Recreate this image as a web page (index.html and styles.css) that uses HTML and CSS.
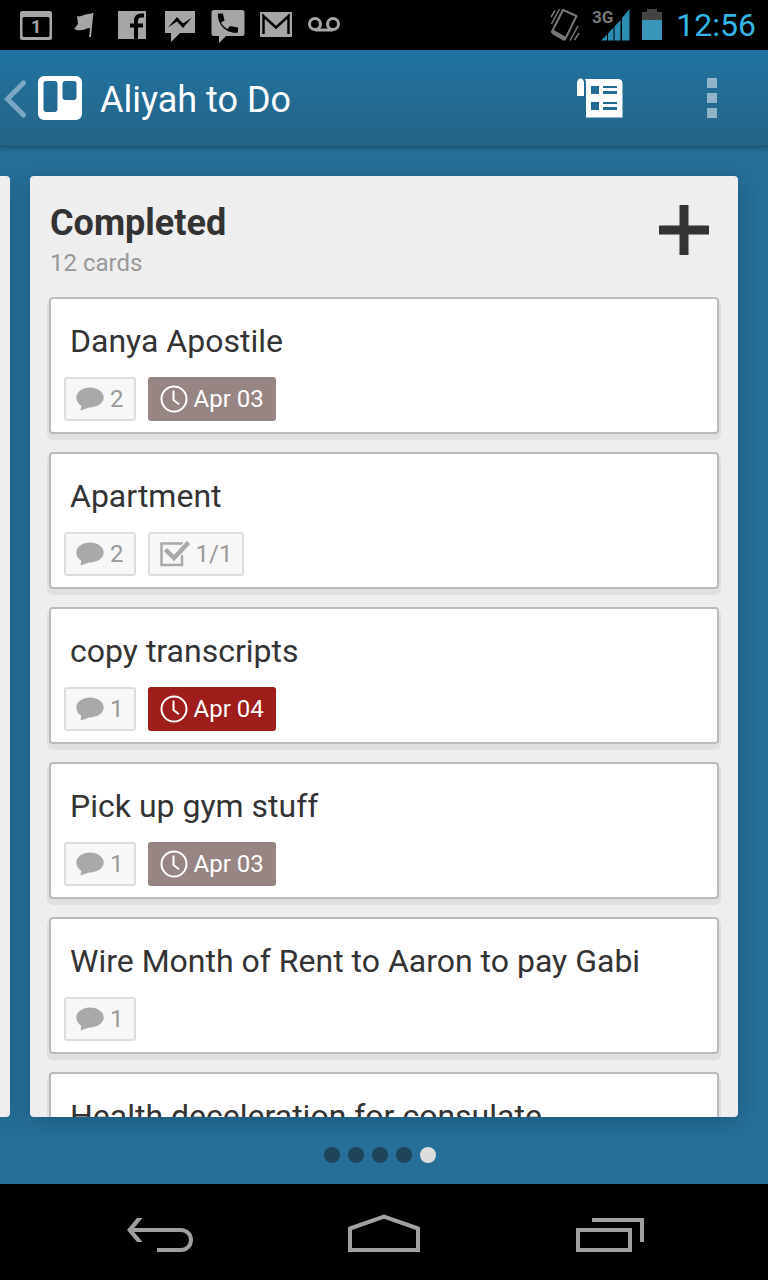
FILE: index.html
```html
<!DOCTYPE html>
<html lang="en">
<head>
    <meta charset="UTF-8">
    <meta name="viewport" content="width=device-width, initial-scale=1.0">
    <title>Aliyah to Do</title>
    <link rel="stylesheet" href="styles.css">
</head>
<body>
    <!-- shared badge icons -->
    <svg class="defs" aria-hidden="true">
        <symbol id="comment" viewBox="0 0 28 24">
            <path d="M14 0.5C6.300.5 0.300 5 0.300 10.500c0 3.700 2 6.500 5 8.300L4.500 23.600l8.800-3.200C21.500 20.500 27.700 16 27.700 10.500S21.700.5 14 .5z" fill="#a9a9a9"/>
        </symbol>
        <symbol id="clock" viewBox="0 0 28 28">
            <circle cx="14" cy="14" r="12.500" fill="none" stroke="#fff" stroke-width="2"/>
            <path d="M13.500 5.500V15l5.500 4.200" fill="none" stroke="#fff" stroke-width="2"/>
        </symbol>
        <symbol id="check" viewBox="0 0 30 26">
            <path d="M23 2.500H1.500V24H22V14" fill="none" stroke="#a9a9a9" stroke-width="2.500"/>
            <path d="M5.500 8.500l8.500 8.500L28.500 1.500" fill="none" stroke="#f7f7f7" stroke-width="7"/>
            <path d="M5.500 8.500l8.500 8.500L28.500 1.500" fill="none" stroke="#a9a9a9" stroke-width="4.500"/>
        </symbol>
    </svg>

    <div class="statusbar">
        <div class="notifications">
            <svg width="48" height="50" viewBox="0 0 48 50">
                <path fill-rule="evenodd" d="M10 11h28a2 2 0 0 1 2 2v25a2 2 0 0 1-2 2H10a2 2 0 0 1-2-2V13a2 2 0 0 1 2-2zM12 17a1.500 1.500 0 0 0-1.500 1.500v17A1.500 1.500 0 0 0 12 37h24a1.500 1.500 0 0 0 1.500-1.500v-17A1.500 1.500 0 0 0 36 17z" fill="#a6a6a6"/>
                <text x="19" y="33" class="day">1</text>
            </svg>
            <svg width="48" height="50" viewBox="0 0 48 50">
                <path d="M17 16c4 2 8-3 15-2L30.500 28c-4-.5-9 4.500-16.500 1l4-5z" fill="#a6a6a6"/>
                <path d="M32.500 13L30 37" stroke="#a6a6a6" stroke-width="1.800"/>
            </svg>
            <svg width="48" height="50" viewBox="0 0 48 50">
                <path d="M10 11h28v28H10z" fill="#a6a6a6"/>
                <path d="M28 39V21c0-4 2-5.500 5-5.500h3M22 25.500h13" fill="none" stroke="#000" stroke-width="4"/>
            </svg>
            <svg width="48" height="50" viewBox="0 0 48 50">
                <path d="M9 11h30v22H24l-9 9v-9H9z" fill="#a6a6a6"/>
                <path d="M12 27.500l9-10.500 6 6.500 9-6-9 10.500-6-6.500z" fill="#000"/>
            </svg>
            <svg width="48" height="50" viewBox="0 0 48 50">
                <path d="M10 10h28a2.500 2.500 0 0 1 2.500 2.500v21A2.500 2.500 0 0 1 38 36H22l-7 7v-7h-5a2.500 2.500 0 0 1-2.500-2.500v-21A2.500 2.500 0 0 1 10 10z" fill="#a6a6a6"/>
                <path d="M14 13.500l5 0 1.500 7-3.500 2c1.500 3 3.500 5 6.500 6.500l2.500-3 8 1.500v5c-11 2-21-8-20-19z" fill="#000"/>
            </svg>
            <svg width="48" height="50" viewBox="0 0 48 50">
                <path d="M8 12h32v25H8z" fill="#a6a6a6"/>
                <path d="M11.500 34V16L24 27.500 36.500 16v18" fill="none" stroke="#000" stroke-width="2.500"/>
            </svg>
            <svg width="48" height="50" viewBox="0 0 48 50">
                <g fill="none" stroke="#a6a6a6" stroke-width="3">
                    <circle cx="15" cy="24" r="5.500"/>
                    <circle cx="33" cy="24" r="5.500"/>
                    <path d="M15 30h18"/>
                </g>
            </svg>
        </div>
        <div class="system">
            <svg width="30" height="50" viewBox="0 0 30 50">
                <path d="M13 10l13.500 6L15 39.500 1.800 32z" fill="none" stroke="#777" stroke-width="2" stroke-linejoin="round"/>
                <path d="M3 29.500l13 7.500-2 4L2 34z" fill="#777"/>
                <path d="M9.500 9L1.500 24M5 10.500L1 17M28 26l-8 14.500M29 33l-4.500 7" stroke="#777" stroke-width="1.500"/>
            </svg>
            <svg width="38" height="50" viewBox="0 0 38 50">
                <path d="M9 40.500l6-6v6zM16 33.500l5.500-6v13H16zM22.500 26.500l6-6.500v20.500h-6zM30 18l7.500-9v31.500H30z" fill="#2a8db3"/>
                <text x="0" y="23" class="network">3G</text>
            </svg>
            <svg width="20" height="50" viewBox="0 0 20 50">
                <path d="M0 20v-8h5V9h10v3h5v8z" fill="#444"/>
                <path d="M0 20h20v20H0z" fill="#3996ba"/>
            </svg>
            <span class="time">12:56</span>
        </div>
    </div>

    <header class="actionbar">
        <button class="up" aria-label="Boards">
            <svg width="82" height="96" viewBox="0 0 82 96">
                <path d="M23.500 33L7.500 49l16 16" fill="none" stroke="#7aa7c1" stroke-width="5" stroke-linecap="round"/>
                <path fill-rule="evenodd" d="M44 26h32a6 6 0 0 1 6 6v32a6 6 0 0 1-6 6H44a6 6 0 0 1-6-6V32a6 6 0 0 1 6-6zM46.500 31a3 3 0 0 0-3 3v25a3 3 0 0 0 3 3h8a3 3 0 0 0 3-3V34a3 3 0 0 0-3-3zM65.500 31a3 3 0 0 0-3 3v13a3 3 0 0 0 3 3h8a3 3 0 0 0 3-3V34a3 3 0 0 0-3-3z" fill="#fff"/>
            </svg>
        </button>
        <h1 class="board-title">Aliyah to Do</h1>
        <button class="action" aria-label="Activity">
            <svg width="46" height="40" viewBox="0 0 46 40">
                <path d="M0 18V5c0-6 7-6 7 0v13z" fill="#fff"/>
                <path fill-rule="evenodd" d="M8 1h33q4.500 0 4.500 4.500V39.500H9V5q0-2-1-4zM14 8v8h8V8zM26 8v2h14V8zM26 13v3h14v-3zM14 24v8h8v-8zM26 24v2h14v-2zM26 29v3h14v-3z" fill="#fff"/>
            </svg>
        </button>
        <button class="action" aria-label="More options">
            <svg width="10" height="40" viewBox="0 0 10 40">
                <path d="M0 0h10v10H0zM0 15h10v10H0zM0 30h10v10H0z" fill="#90b5cb"/>
            </svg>
        </button>
    </header>

    <main class="board">
        <div class="lists">
            <div class="list-peek"></div>
            <section class="list">
                <div class="list-header">
                    <div>
                        <h2 class="list-title">Completed</h2>
                        <p class="list-count">12 cards</p>
                    </div>
                    <button class="add" aria-label="Add card">
                        <svg width="50" height="50" viewBox="0 0 50 50">
                            <path d="M25 0v50M0 25h50" stroke="#333" stroke-width="9"/>
                        </svg>
                    </button>
                </div>
                <div class="cards">
                    <article class="card">
                        <h3 class="card-title">Danya Apostile</h3>
                        <div class="badges">
                            <span class="badge"><svg width="28" height="24"><use href="#comment"/></svg>2</span>
                            <span class="badge due"><svg width="28" height="28"><use href="#clock"/></svg>Apr 03</span>
                        </div>
                    </article>
                    <article class="card">
                        <h3 class="card-title">Apartment</h3>
                        <div class="badges">
                            <span class="badge"><svg width="28" height="24"><use href="#comment"/></svg>2</span>
                            <span class="badge"><svg width="30" height="26"><use href="#check"/></svg>1/1</span>
                        </div>
                    </article>
                    <article class="card">
                        <h3 class="card-title">copy transcripts</h3>
                        <div class="badges">
                            <span class="badge"><svg width="28" height="24"><use href="#comment"/></svg>1</span>
                            <span class="badge due overdue"><svg width="28" height="28"><use href="#clock"/></svg>Apr 04</span>
                        </div>
                    </article>
                    <article class="card">
                        <h3 class="card-title">Pick up gym stuff</h3>
                        <div class="badges">
                            <span class="badge"><svg width="28" height="24"><use href="#comment"/></svg>1</span>
                            <span class="badge due"><svg width="28" height="28"><use href="#clock"/></svg>Apr 03</span>
                        </div>
                    </article>
                    <article class="card">
                        <h3 class="card-title">Wire Month of Rent to Aaron to pay Gabi</h3>
                        <div class="badges">
                            <span class="badge"><svg width="28" height="24"><use href="#comment"/></svg>1</span>
                        </div>
                    </article>
                    <article class="card">
                        <h3 class="card-title">Health deceleration for consulate</h3>
                    </article>
                </div>
            </section>
        </div>
        <div class="pager">
            <span class="dot"></span>
            <span class="dot"></span>
            <span class="dot"></span>
            <span class="dot"></span>
            <span class="dot current"></span>
        </div>
    </main>

    <nav class="navbar">
        <button aria-label="Back">
            <svg width="72" height="40" viewBox="0 0 72 40">
                <path d="M8 16h49c5.500 0 10 4.500 10 10s-4.500 10-10 10H33" fill="none" stroke="#a0a0a0" stroke-width="4"/>
                <path d="M13 4h5.500L8.500 16l10 12H13L3 16z" fill="#a0a0a0"/>
            </svg>
        </button>
        <button aria-label="Home">
            <svg width="72" height="40" viewBox="0 0 72 40">
                <path d="M2 36V14.500L36 2.500l34 12V36z" fill="none" stroke="#a0a0a0" stroke-width="4"/>
            </svg>
        </button>
        <button aria-label="Recent apps">
            <svg width="72" height="40" viewBox="0 0 72 40">
                <path d="M6 16h52v20H6zM20 6h50v22" fill="none" stroke="#a0a0a0" stroke-width="4"/>
            </svg>
        </button>
    </nav>
</body>
</html>
```

FILE: styles.css
```css
* { box-sizing: border-box; margin: 0; padding: 0; }
body { display: flex; flex-direction: column; height: 100vh; overflow: hidden; background: #256f98; font-family: Roboto, "Noto Sans", sans-serif; color: #333; }
button { border: 0; background: none; cursor: pointer; }
svg { display: block; flex: none; }
.defs { display: none; }

/* status bar */
.statusbar { display: flex; justify-content: space-between; height: 50px; padding: 0 12px; background: #000; }
.notifications, .system { display: flex; }
.system { align-items: center; gap: 12px; }
.day { font-size: 18px; font-weight: bold; fill: #a6a6a6; }
.network { font-size: 17px; font-weight: bold; fill: #777; }
.time { margin-left: 2px; font-size: 32px; line-height: 38px; color: #33b5e5; }

/* action bar */
.actionbar { display: flex; align-items: center; height: 97px; border-bottom: 1px solid #1d4f6b; background: linear-gradient(#2074a1, #256387); box-shadow: 0 1px 6px rgba(0, 0, 0, 0.25); }
.board-title { flex: 1; padding-top: 4px; margin-left: 18px; font-size: 36px; line-height: 42px; font-weight: normal; color: #fff; }
.action { display: flex; align-items: center; justify-content: center; width: 112px; height: 96px; }

/* board */
.board { display: flex; flex: 1; flex-direction: column; min-height: 0; padding-top: 29px; }
.lists { display: flex; flex: 1; gap: 20px; min-height: 0; padding-right: 30px; }
.list-peek { width: 10px; border-radius: 0 4px 4px 0; background: #eee; box-shadow: 0 4px 20px rgba(0, 0, 0, 0.2); }
.list { display: flex; flex: 1; flex-direction: column; overflow: hidden; padding: 26px 19px 0; border-radius: 4px; background: #eee; box-shadow: 0 4px 20px rgba(0, 0, 0, 0.2); }
.list-header { display: flex; justify-content: space-between; align-items: flex-start; padding: 0 10px 20px 1px; }
.list-title { font-size: 36px; line-height: 42px; }
.list-count { margin-top: 5px; font-size: 24px; line-height: 28px; color: #999; }
.add { display: flex; align-items: center; height: 56px; }

.cards { display: flex; flex-direction: column; gap: 18px; }
.card { flex: none; min-height: 137px; padding: 23px 13px 11px; border: 2px solid #bbb; border-radius: 4px; background: #fff; box-shadow: 0 4px 0 2px #e0e0e0; }
.card-title { padding-left: 6px; font-size: 32px; line-height: 38px; font-weight: normal; }
.badges { display: flex; gap: 12px; margin-top: 17px; }
.badge { display: flex; align-items: center; gap: 6px; height: 44px; padding: 0 10px; border: 2px solid #ddd; border-radius: 3px; background: #f7f7f7; font-size: 24px; line-height: 28px; color: #999; }
.due { border-color: #978583; background: #978583; color: #fff; }
.overdue { border-color: #9f1d1b; background: #9f1d1b; }

.pager { display: flex; justify-content: center; gap: 8px; padding: 30px 0 21px; margin-right: 8px; }
.dot { width: 16px; height: 16px; border-radius: 50%; background: #1f4358; }
.current { background: #ddd; }

/* navigation bar */
.navbar { display: flex; justify-content: center; align-items: center; gap: 40px; height: 96px; background: #000; }
.navbar button { display: flex; align-items: center; justify-content: center; width: 184px; height: 96px; padding-top: 4px; }
```
